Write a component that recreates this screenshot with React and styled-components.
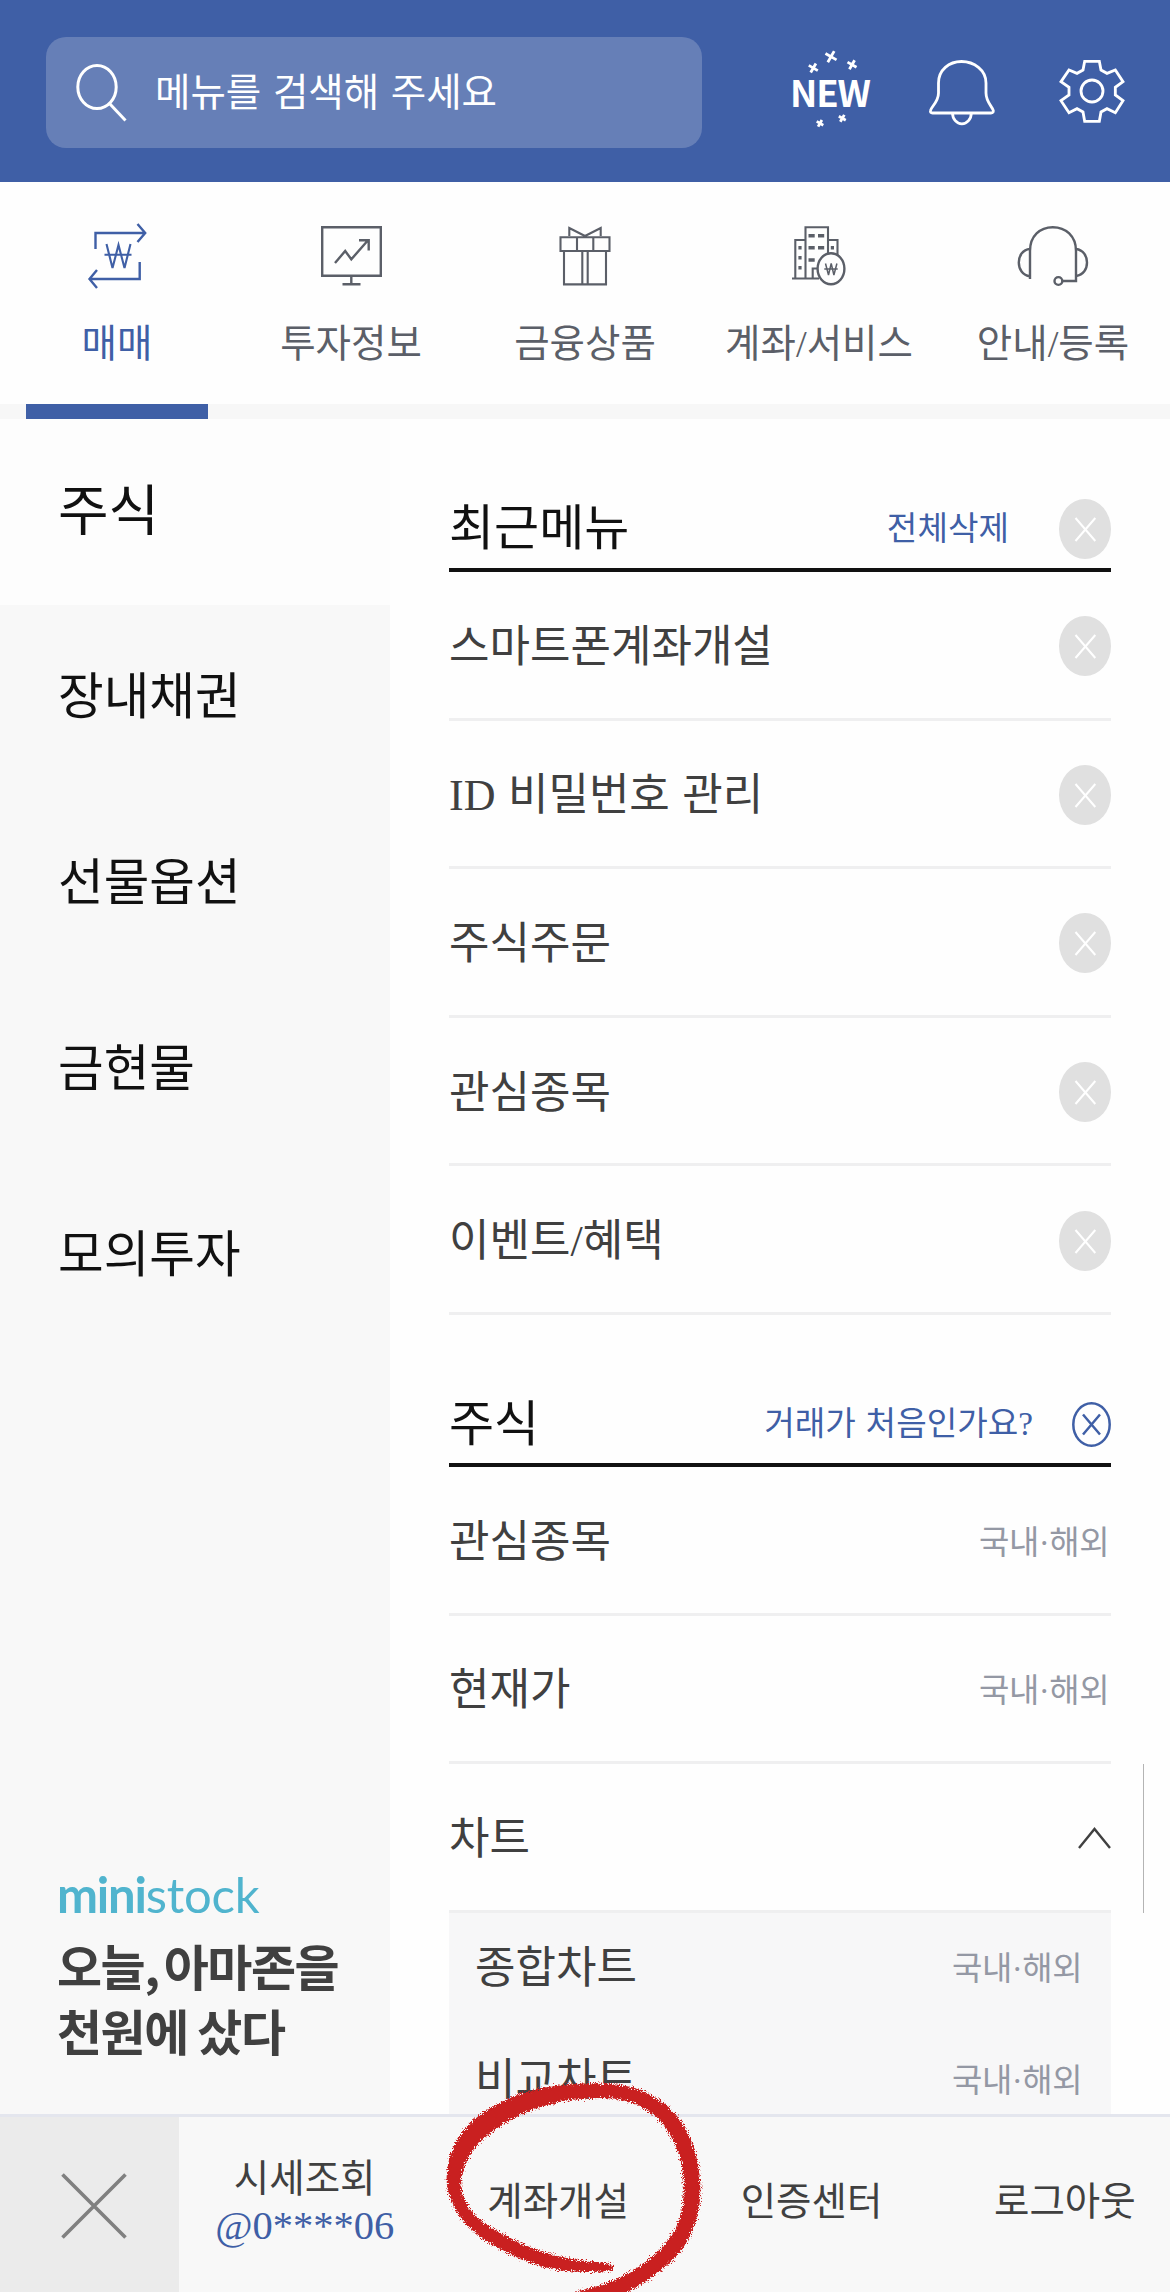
import React, { useState } from 'react'
import styled, { createGlobalStyle } from 'styled-components'

const GlobalStyle = createGlobalStyle`
  * {
    box-sizing: border-box;
  }
  body {
    margin: 0;
    background: #fefefe;
    font-family: 'Liberation Serif', 'Noto Sans CJK KR', sans-serif;
  }
  button {
    margin: 0;
    padding: 0;
    border: 0;
    background: none;
    color: inherit;
    font: inherit;
    cursor: pointer;
  }
  svg {
    display: block;
    flex: none;
  }
`

const Page = styled.div`
  width: 1170px;
  height: 2292px;
  display: flex;
  flex-direction: column;
  overflow: hidden;
  position: relative;
  background: #fefefe;
`

const Header = styled.header`
  flex: none;
  height: 182px;
  display: flex;
  align-items: flex-start;
  padding: 37px 0 0 46px;
  background: #3f5fa6;
  color: #fff;
`

const SearchBox = styled.div`
  width: 656px;
  height: 111px;
  border-radius: 20px;
  background: #667fb7;
  display: flex;
  align-items: center;
  padding-left: 28px;
`

const SearchText = styled.span`
  margin-left: 27px;
  font-size: 38.5px;
  line-height: 50px;
  word-spacing: 2px;
`

const HeaderIcons = styled.div`
  display: flex;
  align-items: center;
  margin-left: 78px;
  margin-top: 3px;
  height: 100px;
`

const IconButton = styled.button`
  margin-left: ${(p) => p.$gap || 0}px;
  padding-top: ${(p) => p.$drop || 0}px;
`

const Tabs = styled.nav`
  flex: none;
  height: 237px;
  display: flex;
  background: linear-gradient(#fefefe 222px, #f7f7f7 222px);
`

const Tab = styled.button`
  width: 234px;
  height: 237px;
  display: flex;
  flex-direction: column;
  align-items: center;
  padding-top: 33px;
  color: ${(p) => (p.$active ? '#3f5fa6' : '#5b5f68')};
  &::after {
    content: '';
    margin-top: auto;
    width: 182px;
    height: 15px;
    background: ${(p) => (p.$active ? '#3f5fa6' : 'transparent')};
  }
`

const TabLabel = styled.span`
  margin-top: 22px;
  font-size: 38.5px;
  line-height: 54px;
  white-space: nowrap;
`

const Body = styled.div`
  flex: 1;
  min-height: 0;
  display: flex;
  overflow: hidden;
`

const Side = styled.aside`
  width: 390px;
  background: #f8f8f8;
  display: flex;
  flex-direction: column;
`

const SideItem = styled.button`
  height: 186px;
  padding-left: 58px;
  text-align: left;
  font-size: ${(p) => (p.$active ? 55 : 49.6)}px;
  line-height: 70px;
  color: #111;
  background: ${(p) => (p.$active ? '#fdfdfd' : 'transparent')};
`

const Banner = styled.div`
  margin-top: auto;
  padding: 0 0 52px 57px;
`

const BannerLogo = styled.div`
  font-family: Lato, sans-serif;
  font-size: 49px;
  line-height: 60px;
  font-weight: 400;
  letter-spacing: -0.2px;
  color: #50b4ce;
  white-space: nowrap;
  b {
    font-weight: 700;
    letter-spacing: -1.2px;
  }
`

const BannerText = styled.p`
  margin: 8px 0 0;
  font-family: 'Noto Sans CJK KR', sans-serif;
  font-size: 49px;
  line-height: 65px;
  font-weight: 700;
  letter-spacing: -1.5px;
  color: #404040;
`

const Comma = styled.span`
  letter-spacing: -6px;
`

const Content = styled.main`
  flex: 1;
  padding: 0 59px;
`

const SectionHead = styled.div`
  height: ${(p) => p.$height}px;
  padding-top: ${(p) => p.$top}px;
  border-bottom: 4px solid #111;
  display: flex;
  align-items: center;
`

const SectionTitle = styled.h2`
  margin: 0 auto 0 0;
  padding-top: 1px;
  font-size: 49px;
  line-height: 60px;
  font-weight: 400;
  color: #111;
`

const HeadLink = styled.button`
  margin-right: ${(p) => p.$gap}px;
  font-size: 33.2px;
  line-height: 44px;
  word-spacing: 1.5px;
  color: #3f5fa6;
`

const Row = styled.div`
  position: relative;
  height: 148.6px;
  padding-top: 3px;
  border-bottom: 3px solid #efeff0;
  display: flex;
  align-items: center;
  justify-content: space-between;
`

const RowLabel = styled.span`
  padding-top: 3px;
  font-size: 44px;
  line-height: 60px;
  word-spacing: 1.5px;
  color: #404040;
`

const Market = styled.span`
  padding-top: 3px;
  margin-right: 2px;
  font-size: 33px;
  line-height: 44px;
  letter-spacing: -0.5px;
  color: #9498a4;
`

const ScrollBar = styled.i`
  position: absolute;
  right: -33px;
  top: 0;
  width: 1px;
  height: 149px;
  background: #b4b4b4;
`

const SubList = styled.div`
  background: #f7f7f8;
  padding: 0 27px 0 26px;
`

const SubRow = styled.div`
  height: 111.5px;
  padding-bottom: 2px;
  display: flex;
  align-items: center;
  justify-content: space-between;
`

const Footer = styled.footer`
  flex: none;
  height: 178px;
  border-top: 3px solid #e4e6ee;
  background: #f8f8f8;
  display: flex;
  overflow: hidden;
`

const CloseButton = styled.button`
  flex: none;
  width: 179px;
  background: #ebebeb;
  padding-left: 61px;
  padding-top: 2px;
`

const FooterItem = styled.button`
  flex: none;
  width: 253.4px;
  padding: 0 2px 5px 0;
  display: flex;
  flex-direction: column;
  align-items: center;
  justify-content: center;
  font-size: 38.5px;
  line-height: 48px;
  color: #404040;
`

const AccountId = styled.span`
  font-size: 40.5px;
  line-height: 46px;
  color: #3f5fa6;
`

const Marker = styled.svg`
  position: absolute;
  left: 420px;
  top: 2062px;
  pointer-events: none;
`

const SearchIcon = () => (
  <svg width="54" height="62" viewBox="0 0 54 62" fill="none" stroke="#fff" strokeWidth="3">
    <ellipse cx="23" cy="25" rx="19.2" ry="21.5" />
    <path d="M35.5 41.5 51.5 58.5" />
  </svg>
)

const stars = [
  [51, 16.7, 6.4],
  [33.3, 28, 5.2],
  [72, 24.7, 5.2],
  [40, 83.3, 3.8],
  [62.3, 78.3, 4],
]

const NewIcon = () => (
  <svg width="104" height="100" viewBox="0 0 104 100">
    {stars.map(([x, y, r]) => (
      <path
        key={x}
        d={`M${-r} 0H${r}M0 ${-r}V${r}`}
        transform={`translate(${x} ${y}) rotate(30)`}
        stroke="#fff"
        strokeWidth="2.8"
      />
    ))}
    <text
      x="10"
      y="66.5"
      fill="#fff"
      fontFamily="Noto Sans CJK KR, sans-serif"
      fontWeight="700"
      fontSize="36.5"
      textLength="81"
      lengthAdjust="spacing"
    >
      NEW
    </text>
  </svg>
)

const BellIcon = () => (
  <svg width="80" height="80" viewBox="0 0 80 80" fill="none" stroke="#fff" strokeWidth="2.8">
    <path d="M17.5 31C17.5 18 28 9.5 40.5 9.5S65 18 65 31V41C65 50 71.5 55 72.3 58.5Q72.5 61 70 61H11.5Q9 61 9.5 58.5C10 55 17.5 50 17.5 41Z" />
    <path d="M31.5 61a9.4 10.8 0 0 0 18.8 0" />
  </svg>
)

const GearIcon = () => (
  <svg width="70" height="70" viewBox="1010 168 210 210" fill="none" stroke="#fff" strokeWidth="8.5">
    <path d="M1093 184H1137L1142 210 1160 220 1185 210 1208 245 1185 262V285L1208 302 1185 338 1160 326 1142 336 1137 364H1093L1088 336 1070 326 1046 338 1022 302 1046 285V262L1022 245 1046 210 1070 220 1088 210Z" />
    <circle cx="1115" cy="273" r="33" />
  </svg>
)

const TabIcon = ({ children }) => (
  <svg width="80" height="80" viewBox="0 0 80 80" fill="none" stroke="currentColor" strokeWidth="2.4">
    {children}
  </svg>
)

const TradeIcon = () => (
  <TabIcon>
    <path d="M18.5 34V18H67.5M60.5 9l7.7 9-7.7 9M62.7 47V64H13M20 55l-7.5 9 7.5 9" />
    <path d="M29.5 29l6 24 6-23 6 23 6-24M27.5 39.7H54.5" strokeWidth="2.1" />
  </TabIcon>
)

const InfoIcon = () => (
  <TabIcon>
    <path d="M11.2 12.2H69.8V60.8H11.2ZM40.3 61V69.3M31.5 69.3H49.5" />
    <path d="M24 48 34.2 36 40.3 44.3 57 25.3M48 25.2H57.7V35.5" />
  </TabIcon>
)

const GiftIcon = () => (
  <TabIcon>
    <path
      d="M15.5 22.2H64.5V36H15.5ZM19 36V69.4H61V36M32 22V36M48.3 22V36M37.3 36V69M42.7 36V69M24.3 21V13L40 21 55.7 13V21"
      strokeWidth="2.1"
    />
  </TabIcon>
)

const BankIcon = () => (
  <TabIcon>
    <path d="M13 63.5H40M16.3 63V25H26M26.5 63V12.3H49V38M49 25H58.5V40M33.7 63V53.5H39" strokeWidth="2.1" />
    <path
      d="M29.5 20.7H35.7M39 20.7H45.2M29.5 32.7H35.7M39 32.7H45.2M29.5 45H35.7M19.4 32.7H22.6M19.4 42.7H22.6M19.4 52.7H22.6M51.8 32.7H55"
      strokeWidth="3.4"
    />
    <ellipse cx="52" cy="53.7" rx="13.4" ry="15.5" fill="#fefefe" />
    <path d="M46.5 48.5l3 11.5 2.7-11.5 2.7 11.5 3-11.5M45.3 54H58.7" strokeWidth="1.5" />
  </TabIcon>
)

const HeadsetIcon = () => (
  <TabIcon>
    <path d="M17 64V36C17 21 27 12.2 39.8 12.2S63 21 63 36V66H50" />
    <path d="M17 34C9.5 34.5 5.8 41 5.8 47.5S9.5 60.5 17 61.3M63 34C70.5 35 74 41 74 47.5S70.5 60 63 61" />
    <circle cx="45.4" cy="66" r="3.9" />
  </TabIcon>
)

const DeleteIcon = () => (
  <svg width="52" height="60" viewBox="0 0 52 60">
    <ellipse cx="26" cy="30" rx="26" ry="30" fill="#e0e0e0" />
    <path d="M16.5 19 36.3 42M36.3 19 16.5 42" stroke="#fff" strokeWidth="2" />
  </svg>
)

const CircleXIcon = () => (
  <svg width="39" height="45" viewBox="0 0 39 45" fill="none" stroke="#3f5fa6">
    <ellipse cx="19.5" cy="22.5" rx="18.2" ry="21.2" strokeWidth="2.5" />
    <path d="M11 12.5 28 32.5M28 12.5 11 32.5" strokeWidth="2.5" />
  </svg>
)

const ChevronUp = () => (
  <svg width="33" height="22" viewBox="0 0 33 22" fill="none" stroke="#404040" strokeWidth="2.4">
    <path d="M1 21 16.5 2 32 21" />
  </svg>
)

const CloseIcon = () => (
  <svg width="66" height="66" viewBox="0 0 66 66" stroke="#808080" strokeWidth="3.6">
    <path d="M1.5 1.5 64.5 64.5M64.5 1.5 1.5 64.5" />
  </svg>
)

// outline of the red pen stroke, in thirds of a pixel
const penPoints = [
  [520, 590], [515, 600], [430, 605], [330, 596], [230, 562], [130, 508], [55, 440], [17, 345], [32, 245],
  [80, 168], [160, 108], [260, 64], [380, 44], [500, 41], [595, 56], [690, 110], [752, 200], [781, 320],
  [776, 430], [735, 530], [660, 604], [560, 668], [480, 700], [380, 685], [420, 663], [500, 645], [600, 595], [678, 528],
  [725, 450], [737, 350], [724, 255], [682, 170], [622, 115], [550, 84], [460, 80], [350, 92], [240, 130],
  [150, 183], [90, 243], [58, 320], [66, 388], [110, 450], [200, 503], [300, 548], [400, 573], [510, 582],
]

const smoothPath = (pts) => {
  const mid = (a, b) => `${(a[0] + b[0]) / 2} ${(a[1] + b[1]) / 2}`
  let d = `M${mid(pts[pts.length - 1], pts[0])}`
  pts.forEach((p, i) => {
    d += `Q${p[0]} ${p[1]} ${mid(p, pts[(i + 1) % pts.length])}`
  })
  return d + 'Z'
}

const PenCircle = () => (
  <Marker width="300" height="230" viewBox="-60 -24 900 690">
    <filter id="rough" x="-5%" y="-5%" width="110%" height="110%" colorInterpolationFilters="sRGB">
      <feTurbulence type="fractalNoise" baseFrequency="0.3" numOctaves="2" seed="4" />
      <feDisplacementMap in="SourceGraphic" scale="26" xChannelSelector="R" yChannelSelector="G" />
    </filter>
    <path
      d={smoothPath(penPoints)}
      fill="#c92020"
      stroke="#c92020"
      strokeWidth="5"
      filter="url(#rough)"
    />
  </Marker>
)

const tabs = [
  { label: '매매', Icon: TradeIcon },
  { label: '투자정보', Icon: InfoIcon },
  { label: '금융상품', Icon: GiftIcon },
  { label: '계좌/서비스', Icon: BankIcon },
  { label: '안내/등록', Icon: HeadsetIcon },
]

const sideMenu = ['주식', '장내채권', '선물옵션', '금현물', '모의투자']

const recentMenu = ['스마트폰계좌개설', 'ID 비밀번호 관리', '주식주문', '관심종목', '이벤트/혜택']

const App = () => {
  const [tab, setTab] = useState(0)
  const [side, setSide] = useState(0)

  return (
    <Page>
      <GlobalStyle />
      <Header>
        <SearchBox>
          <SearchIcon />
          <SearchText>메뉴를 검색해 주세요</SearchText>
        </SearchBox>
        <HeaderIcons>
          <IconButton><NewIcon /></IconButton>
          <IconButton $gap={37} $drop={4}><BellIcon /></IconButton>
          <IconButton $gap={56} $drop={2}><GearIcon /></IconButton>
        </HeaderIcons>
      </Header>

      <Tabs>
        {tabs.map(({ label, Icon }, i) => (
          <Tab key={label} $active={i === tab} onClick={() => setTab(i)}>
            <Icon />
            <TabLabel>{label}</TabLabel>
          </Tab>
        ))}
      </Tabs>

      <Body>
        <Side>
          {sideMenu.map((label, i) => (
            <SideItem key={label} $active={i === side} onClick={() => setSide(i)}>
              {label}
            </SideItem>
          ))}
          <Banner>
            <BannerLogo><b>mini</b>stock</BannerLogo>
            <BannerText>오늘<Comma>,</Comma> 아마존을<br />천원에 샀다</BannerText>
          </Banner>
        </Side>

        <Content>
          <SectionHead $height={153} $top={70}>
            <SectionTitle>최근메뉴</SectionTitle>
            <HeadLink $gap={50}>전체삭제</HeadLink>
            <DeleteIcon />
          </SectionHead>
          {recentMenu.map((label) => (
            <Row key={label}>
              <RowLabel>{label}</RowLabel>
              <DeleteIcon />
            </Row>
          ))}

          <SectionHead $height={152} $top={71}>
            <SectionTitle>주식</SectionTitle>
            <HeadLink $gap={39}>거래가 처음인가요?</HeadLink>
            <CircleXIcon />
          </SectionHead>
          <Row>
            <RowLabel>관심종목</RowLabel>
            <Market>국내·해외</Market>
          </Row>
          <Row>
            <RowLabel>현재가</RowLabel>
            <Market>국내·해외</Market>
          </Row>
          <Row>
            <RowLabel>차트</RowLabel>
            <ChevronUp />
            <ScrollBar />
          </Row>
          <SubList>
            <SubRow>
              <RowLabel>종합차트</RowLabel>
              <Market>국내·해외</Market>
            </SubRow>
            <SubRow>
              <RowLabel>비교차트</RowLabel>
              <Market>국내·해외</Market>
            </SubRow>
          </SubList>
        </Content>
      </Body>

      <Footer>
        <CloseButton><CloseIcon /></CloseButton>
        <FooterItem>
          시세조회
          <AccountId>@0****06</AccountId>
        </FooterItem>
        <FooterItem>계좌개설</FooterItem>
        <FooterItem>인증센터</FooterItem>
        <FooterItem>로그아웃</FooterItem>
      </Footer>
      <PenCircle />
    </Page>
  )
}

export default App
